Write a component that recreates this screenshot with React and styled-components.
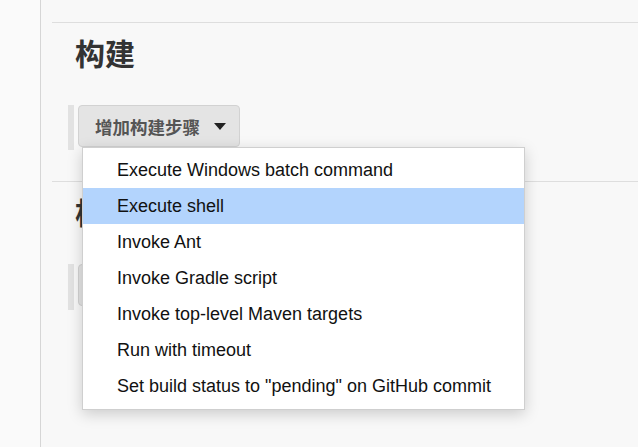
import React from 'react'
import styled, { createGlobalStyle } from 'styled-components'

const GlobalStyle = createGlobalStyle`
  html, body {
    margin: 0;
    padding: 0;
    background: #f9f9f9;
    font-family: "Liberation Sans", "Noto Sans CJK SC", sans-serif;
  }
`

const steps = [
  'Execute Windows batch command',
  'Execute shell',
  'Invoke Ant',
  'Invoke Gradle script',
  'Invoke top-level Maven targets',
  'Run with timeout',
  'Set build status to "pending" on GitHub commit'
]

const Page = styled.div`
  display: flex;
  height: 447px;
  overflow: hidden;
  position: relative;
`

const Sidebar = styled.div`
  width: 40px;
  flex: none;
  background: #fafafa;
  border-right: 1px solid #d6d6d6;
`

const Main = styled.div`
  flex: 1;
  padding-left: 11px;
  padding-top: 22px;
  background: #f8f8f8;
`

const Section = styled.section`
  border-top: 1px solid #dedede;
  padding-left: 16px;
  height: ${p => p.$height}px;
`

const Heading = styled.h2`
  margin: 11px 0 0 7px;
  font-family: "Noto Sans CJK SC", sans-serif;
  font-size: 30px;
  line-height: 36px;
  font-weight: 700;
  color: #333;
`

const ButtonGroup = styled.div`
  display: flex;
  margin-top: ${p => p.$top}px;
  padding-left: 4px;
  border-left: 6px solid #e2e2e2;
  height: ${p => p.$barHeight}px;
  align-items: flex-start;
`

const AddButton = styled.button`
  display: flex;
  align-items: center;
  gap: 14px;
  height: 42px;
  padding: 0 13px 0 16px;
  border: 1px solid #d2d2d2;
  border-radius: 4px;
  background: #e4e4e4;
  font-family: "Noto Sans CJK SC", sans-serif;
  font-size: 17.5px;
  font-weight: 700;
  color: #555;
  cursor: pointer;
`

const Caret = styled.span`
  width: 0;
  height: 0;
  border-left: 6px solid transparent;
  border-right: 6px solid transparent;
  border-top: 7px solid #222;
`

const Menu = styled.ul`
  position: absolute;
  left: 82px;
  top: 147px;
  width: 441px;
  margin: 0;
  padding: 4px 0 5px;
  list-style: none;
  background: #fff;
  border: 1px solid #cfcfcf;
  box-shadow: 0 4px 14px rgba(0, 0, 0, 0.18);
`

const MenuItem = styled.li`
  height: 36px;
  line-height: 36px;
  padding-left: 34px;
  font-size: 18px;
  color: #111;
  background: ${p => (p.$active ? '#b3d4fd' : 'transparent')};
  white-space: nowrap;
`

export default function App() {
  return (
    <>
      <GlobalStyle />
      <Page>
        <Sidebar />
        <Main>
          <Section $height={158}>
            <Heading>构建</Heading>
            <ButtonGroup $top={35} $barHeight={45}>
              <AddButton>
                增加构建步骤
                <Caret />
              </AddButton>
            </ButtonGroup>
          </Section>
          <Section $height={260}>
            <Heading>构建后操作</Heading>
            <ButtonGroup $top={35} $barHeight={46}>
              <AddButton>
                增加构建后操作步骤
                <Caret />
              </AddButton>
            </ButtonGroup>
          </Section>
        </Main>
        <Menu>
          {steps.map((s, i) => (
            <MenuItem key={s} $active={i === 1}>
              {s}
            </MenuItem>
          ))}
        </Menu>
      </Page>
    </>
  )
}
